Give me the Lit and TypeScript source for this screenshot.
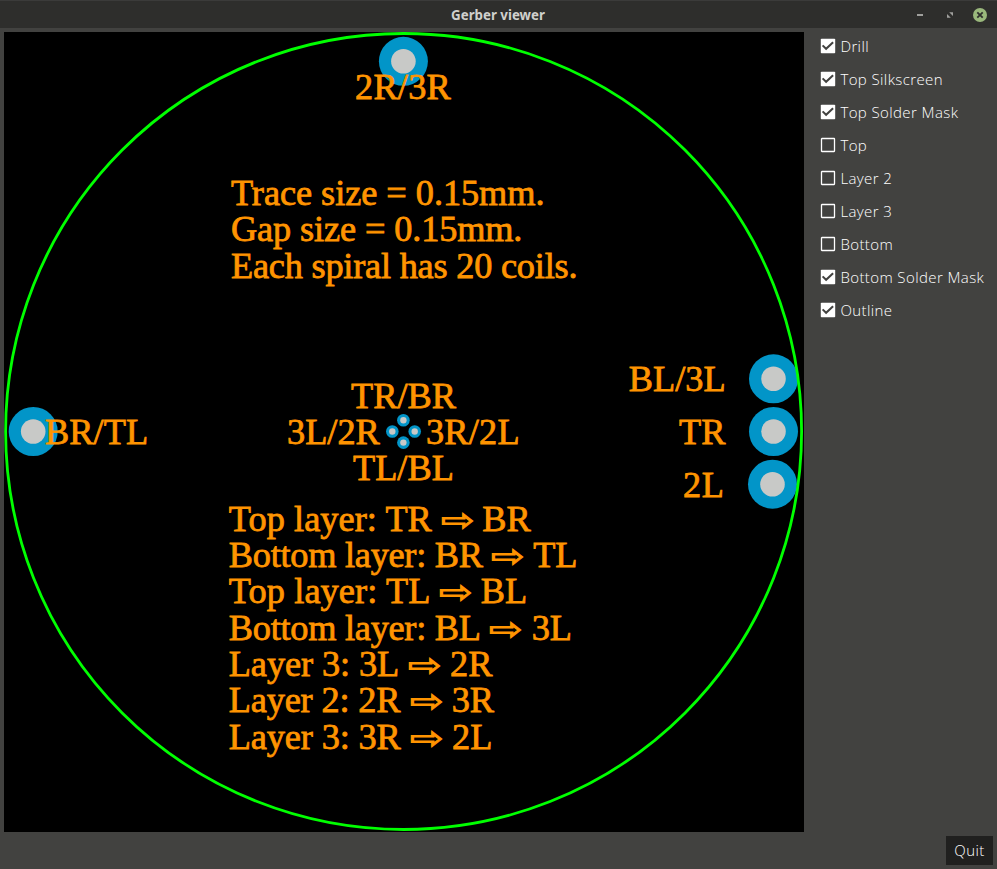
import { LitElement, html, svg, css } from "lit";
import { customElement, state } from "lit/decorators.js";

type Layer = { name: string; on: boolean };
type Label = [x: number, baseline: number, text: string, tracking: number];

const pads = [
  [403.4, 61.3], [33.2, 431.5], [773.5, 378.8], [773.5, 431.5], [772.5, 484.2],
];
const vias = [[403.4, 420.2], [392.3, 431.5], [414.7, 431.5], [403.4, 442.6]];

const labels: Label[] = [
  [355, 99, "2R/3R", 0.25],
  [231, 205, "Trace size = 0.15mm.", -0.05],
  [231, 241.3, "Gap size = 0.15mm.", -0.13],
  [231, 277.7, "Each spiral has 20 coils.", -0.22],
  [351, 407.7, "TR/BR", 0],
  [287, 444, "3L/2R", 0],
  [426, 444, "3R/2L", 0.2],
  [353, 480.2, "TL/BL", 0],
  [45, 444, "BR/TL", 0.1],
  [628.8, 391.4, "BL/3L", 0],
  [679, 444, "TR", 0],
  [683, 497, "2L", 0.7],
];

// Each step: source label, its tracking, arrow left edge, target left edge, target label.
const steps: [string, number, number, number, string][] = [
  ["Top layer: TR", 0.05, 442, 482.5, "BR"],
  ["Bottom layer: BR", -0.26, 492, 533.5, "TL"],
  ["Top layer: TL", 0.1, 440, 481, "BL"],
  ["Bottom layer: BL", -0.26, 490, 532, "3L"],
  ["Layer 3: 3L", -0.1, 409, 450.4, "2R"],
  ["Layer 2: 2R", -0.18, 411, 452, "3R"],
  ["Layer 3: 3R", -0.14, 411, 452.3, "2L"],
];

@customElement("app-root")
export class AppRoot extends LitElement {
  @state() private layers: Layer[] = [
    { name: "Drill", on: true },
    { name: "Top Silkscreen", on: true },
    { name: "Top Solder Mask", on: true },
    { name: "Top", on: false },
    { name: "Layer 2", on: false },
    { name: "Layer 3", on: false },
    { name: "Bottom", on: false },
    { name: "Bottom Solder Mask", on: true },
    { name: "Outline", on: true },
  ];

  static styles = css`
    :host { display: flex; flex-direction: column; box-sizing: border-box; width: 997px; height: 869px;
      background: #424240; color: #fff; font-family: "Noto Sans", "Open Sans", sans-serif; overflow: hidden; }
    .title { display: grid; grid-template-columns: 1fr auto 1fr; align-items: center; height: 28px;
      box-sizing: border-box; border-top: 1px solid #3b3b3a; background: #2e2e2c; flex: none; }
    .title h1 { grid-column: 2; margin: 0 1px 0 0; font-size: 13.3px; line-height: 20px; font-weight: 700; color: #d0d0cc; }
    .buttons { justify-self: end; display: block; }
    .body { display: flex; padding: 4px 0 0 4px; flex: none; }
    .board { display: block; width: 800px; height: 800px; background: #000; flex: none; }
    .board text { font-family: "Liberation Serif", serif; font-size: 36.3px; fill: #ff9400;
      stroke: #ff9400; stroke-width: 0.8px; white-space: pre; }
    .board .arrow { font-family: "DejaVu Sans", sans-serif; font-size: 37.5px; stroke-width: 1.2px; }
    .pad { fill: #0295c8; }
    .hole { fill: #c8c9c7; }
    .outline { fill: none; stroke: #00ff00; stroke-width: 2.8px; }
    .layers { padding-left: 16px; display: flex; flex-direction: column; margin-top: -3px; height: 297px; }
    .layer { display: flex; align-items: center; height: 33px; gap: 4.4px; font: 300 15px "Open Sans", sans-serif;
      letter-spacing: 0.4px; white-space: nowrap; cursor: pointer; }
    .box { display: block; width: 16px; height: 16px; flex: none; }
    .foot { display: flex; justify-content: flex-end; padding: 4px 4px 0 0; }
    .quit { width: 47px; height: 29px; padding: 0 0 2px; border: 0; background: #20201f; color: #fff;
      font: 300 15px "Open Sans", sans-serif; letter-spacing: 0.45px; }
  `;

  private toggle(i: number) {
    this.layers = this.layers.map((l, k) => (k === i ? { ...l, on: !l.on } : l));
  }

  private ring(p: number[], outer: number, inner: number) {
    return svg`<circle class="pad" cx=${p[0]} cy=${p[1]} r=${outer}></circle>
      <circle class="hole" cx=${p[0]} cy=${p[1]} r=${inner}></circle>`;
  }

  render() {
    return html`
      <div class="title">
        <h1>Gerber viewer</h1>
        <svg class="buttons" width="84" height="24" viewBox="913 2 84 24">
          <path d="M917 14h6" stroke="#a0a09d" stroke-width="2" />
          <path d="M949.2 11.2h3.8v3.8zM947 13v3.8h3.8z" fill="#a0a09d" />
          <circle cx="980" cy="14" r="7" fill="#9ab87c" />
          <path d="M977.3 11.3l5.4 5.4m0-5.4l-5.4 5.4" stroke="#2e2e2c" stroke-width="1.8" />
        </svg>
      </div>
      <div class="body">
        <svg class="board" viewBox="4 32 800 800">
          ${pads.map((p) => this.ring(p, 24.5, 12.3))}
          ${vias.map((p) => this.ring(p, 6.3, 3.2))}
          <circle class="outline" cx="403.6" cy="431.5" r="398" />
          ${labels.map(([x, y, t, s]) => svg`<text x=${x} y=${y} letter-spacing=${s}>${t}</text>`)}
          ${steps.map(([a, s, ax, bx, b], i) => {
            const y = 530.8 + i * 36.3;
            return svg`<text x="228.8" y=${y} letter-spacing=${s}>${a}</text>
              <text class="arrow" transform="translate(${ax - 1} ${y}) scale(1.07 0.84)">⇨</text>
              <text x=${bx - 0.3} y=${y}>${b}</text>`;
          })}
        </svg>
        <div class="layers">
          ${this.layers.map((l, i) => html`
            <div class="layer" @click=${() => this.toggle(i)}>
              <svg class="box" viewBox="0 0 16 16">
                ${l.on
                  ? svg`<rect x="0.8" y="0.8" width="14.4" height="14.4" rx="0.8" fill="#fff"></rect>
                    <path d="M2.6 7.4l3.5 3.4 7-6.6" fill="none" stroke="#424240" stroke-width="2"></path>`
                  : svg`<rect x="1.5" y="1.5" width="13" height="13" rx="0.4" fill="none" stroke="#fff" stroke-width="1.3"></rect>`}
              </svg>
              <span>${l.name}</span>
            </div>`)}
        </div>
      </div>
      <div class="foot"><button class="quit">Quit</button></div>
    `;
  }
}
